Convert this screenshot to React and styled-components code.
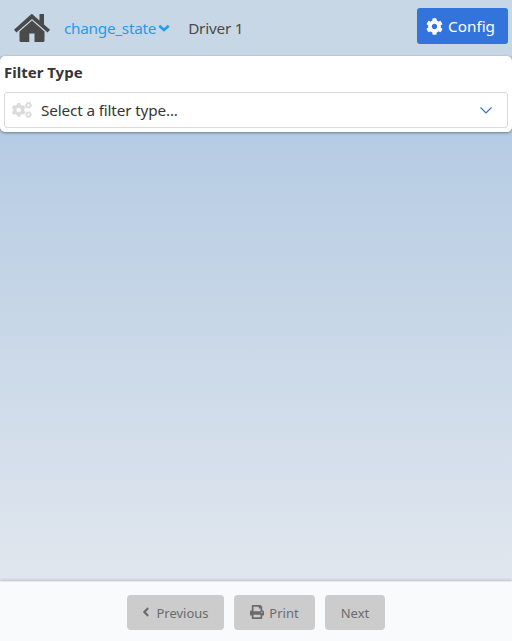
import React from "react";
import styled, { createGlobalStyle } from "styled-components";
import { FaCog, FaCogs, FaAngleLeft, FaPrint } from "react-icons/fa";

const Global = createGlobalStyle`
  * { box-sizing: border-box; }
  body { margin: 0; font-family: "Noto Sans", "Open Sans", sans-serif; color: #363636; }
`;
const Page = styled.div`
  height: 641px; display: flex; flex-direction: column;
  background: linear-gradient(#b5cbe3 20%, #e1e7ee 91%);
`;
const Header = styled.header`
  height: 56px; padding: 0 4px 0 14px; display: flex; align-items: center; background: #c8d7e6; color: #4a4a4a;
`;
const Home = styled.svg` width: 36px; height: 28px; fill: #4a4a4a; `;
const Link = styled.a`
  display: flex; align-items: center; gap: 2px; margin-left: 14px; color: #209cee; font-size: 15.3px; letter-spacing: -0.26px;
`;
const Chevron = styled.svg`
  width: 12px; height: 8px; fill: none; stroke: currentColor; stroke-width: 2.6;
`;
const Driver = styled.span` margin-left: 18px; font-size: 15.3px; letter-spacing: -0.2px; `;
const Config = styled.button`
  margin: 0 0 4px auto; width: 91px; height: 36px; border: 0; border-radius: 3px; background: #3273dc; color: #fff;
  font: 15.3px "Noto Sans", sans-serif; display: flex; align-items: center; justify-content: flex-start; gap: 5px; padding: 0 0 0 9px;
  svg { width: 17px; height: 17px; }
`;
const Panel = styled.section`
  height: 76px; padding: 4px; background: #fff; border-radius: 5px; box-shadow: 0 1px 3px rgba(0,0,0,.4);
`;
const Label = styled.div` height: 24px; line-height: 24px; font-size: 15px; font-weight: 700; `;
const Select = styled.div`
  margin-top: 8px; height: 36px; border: 1px solid #dbdbdb; border-radius: 3px; display: flex; align-items: center;
  gap: 9px; padding: 0 14px 0 7px; font-size: 15.3px; letter-spacing: -0.15px;
`;
const Arrow = styled.svg`
  margin-left: auto; width: 14px; height: 9px; fill: none; stroke: #3273dc; stroke-width: 1.2;
`;
const Footer = styled.footer`
  margin-top: auto; height: 60px; padding-top: 1px; background: #f8fafc; border-top: 1px solid #e6ebf0;
  box-shadow: 0 -1px 3px rgba(40,60,80,.22);
  display: flex; align-items: center; justify-content: center; gap: 10px;
`;
const Button = styled.button`
  width: ${p => p.$w}px; height: 35px; border: 0; border-radius: 4px; background: #ccc; color: #6b6b6b;
  font: 13px "Noto Sans", sans-serif; display: flex; align-items: center; justify-content: center;
  gap: 5px; padding: 2px 0 0;
  svg { margin-bottom: 3px; }
`;
const Previous = styled(Button)`
  gap: 2px;
  padding-right: 2px;
`;
export default function App() {
  return <><Global /><Page>
    <Header>
      <Home viewBox="0 0 36 28"><path d="M18 0 L25.5 6.5 V0 H30 V10.5 L36 15.8 L33.6 18.5 L18 5 L2.4 18.5 L0 15.8 L16.3 1 Q18 -.8 19.7 1Z" /><path d="M18 6.6 L30.5 17.4 V26.5 Q30.5 28 29 28 H20.5 V19.5 H15.3 V28 H7 Q5.5 28 5.5 26.5 V17.4Z" /></Home>
      <Link>change_state<Chevron viewBox="0 0 12 8"><path d="M1.3 1.7 L6 6 L10.7 1.7" /></Chevron></Link><Driver>Driver 1</Driver><Config><FaCog />Config</Config>
    </Header>
    <Panel><Label>Filter Type</Label><Select><FaCogs size={20} color="#dbdbdb" /><span>Select a filter type...</span><Arrow viewBox="0 0 14 9"><path d="M1.5 1.5 L7 7 L12.5 1.5" /></Arrow></Select></Panel>
    <Footer><Previous $w={97}><FaAngleLeft size={14} viewBox="40 0 256 512" />Previous</Previous><Button $w={81}><FaPrint size={14} />Print</Button><Button $w={60}>Next</Button></Footer>
  </Page></>;
}
